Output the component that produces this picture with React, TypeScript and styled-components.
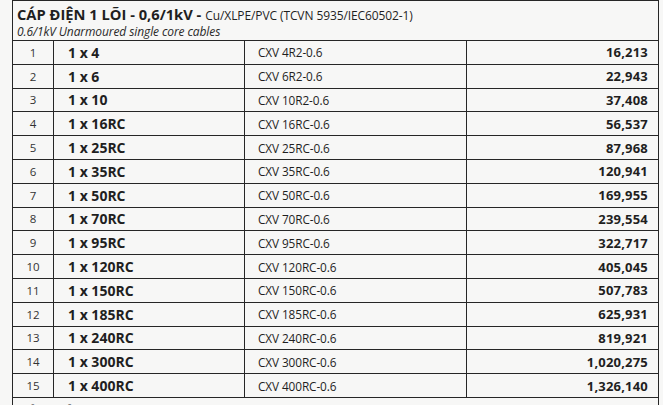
import { createGlobalStyle } from "styled-components";
import styled from "styled-components";

const GlobalStyle = createGlobalStyle`
  html, body {
    margin: 0;
    padding: 0;
    background: #f7f7f6;
    overflow: hidden;
  }
  body {
    font-family: "Open Sans", "Liberation Sans", sans-serif;
    color: #1f1f1f;
  }
`;

const Page = styled.div`
  width: 663px;
  height: 405px;
  overflow: hidden;
  padding-left: 12px;
  box-sizing: border-box;
`;

const Sheet = styled.div`
  width: 647px;
  border-left: 1.5px solid #262626;
  border-right: 1.5px solid #262626;
  border-top: 1.5px solid #262626;
  box-sizing: border-box;
`;

const SectionHead = styled.div`
  display: flex;
  flex-direction: column;
  height: 40px;
  padding-left: 4px;
  border-bottom: 1.5px solid #262626;
  box-sizing: border-box;
`;

const Title = styled.div`
  height: 22px;
  display: flex;
  align-items: flex-end;
  gap: 4px;
  white-space: nowrap;
`;

const TitleStrong = styled.span`
  font-weight: 700;
  font-size: 14.7px;
  line-height: 17px;
`;

const TitleNote = styled.span`
  font-size: 12px;
  line-height: 15px;
  letter-spacing: -0.1px;
`;

const Subtitle = styled.div`
  margin-top: 2px;
  font-style: italic;
  font-size: 12px;
  line-height: 14px;
  letter-spacing: -0.1px;
  color: #2a2a2a;
`;

const Row = styled.div`
  display: grid;
  grid-template-columns: 41px 191px 222px 1fr;
  height: 23.8px;
  border-bottom: 1.5px solid #262626;
  box-sizing: border-box;
`;

const Cell = styled.div<{ $last?: boolean }>`
  display: flex;
  align-items: center;
  border-right: ${(p) => (p.$last ? "none" : "1.5px solid #262626")};
  white-space: nowrap;
  overflow: hidden;
`;

const NumCell = styled(Cell)`
  justify-content: center;
  font-size: 11.5px;
  color: #333;
`;

const SizeCell = styled(Cell)`
  padding-left: 14px;
  font-size: 14px;
  font-weight: 700;
`;

const CodeCell = styled(Cell)`
  padding-left: 13px;
  font-size: 11.8px;
  letter-spacing: -0.1px;
`;

const PriceCell = styled(Cell)`
  justify-content: flex-end;
  padding-right: 10px;
  font-size: 13px;
  font-weight: 700;
  letter-spacing: 0.2px;
`;

const NextHead = styled.div`
  padding: 5px 0 0 4px;
  font-weight: 700;
  font-size: 14.7px;
  line-height: 18px;
  white-space: nowrap;
`;

const rows: [string, string, string][] = [
  ["1 x 4", "CXV 4R2-0.6", "16,213"],
  ["1 x 6", "CXV 6R2-0.6", "22,943"],
  ["1 x 10", "CXV 10R2-0.6", "37,408"],
  ["1 x 16RC", "CXV 16RC-0.6", "56,537"],
  ["1 x 25RC", "CXV 25RC-0.6", "87,968"],
  ["1 x 35RC", "CXV 35RC-0.6", "120,941"],
  ["1 x 50RC", "CXV 50RC-0.6", "169,955"],
  ["1 x 70RC", "CXV 70RC-0.6", "239,554"],
  ["1 x 95RC", "CXV 95RC-0.6", "322,717"],
  ["1 x 120RC", "CXV 120RC-0.6", "405,045"],
  ["1 x 150RC", "CXV 150RC-0.6", "507,783"],
  ["1 x 185RC", "CXV 185RC-0.6", "625,931"],
  ["1 x 240RC", "CXV 240RC-0.6", "819,921"],
  ["1 x 300RC", "CXV 300RC-0.6", "1,020,275"],
  ["1 x 400RC", "CXV 400RC-0.6", "1,326,140"],
];

export default function App() {
  return (
    <Page>
      <GlobalStyle />
      <Sheet>
        <SectionHead>
          <Title>
            <TitleStrong>CÁP ĐIỆN 1 LÕI - 0,6/1kV -</TitleStrong>
            <TitleNote>Cu/XLPE/PVC (TCVN 5935/IEC60502-1)</TitleNote>
          </Title>
          <Subtitle>0.6/1kV Unarmoured single core cables</Subtitle>
        </SectionHead>
        {rows.map(([size, code, price], i) => (
          <Row key={code}>
            <NumCell>{i + 1}</NumCell>
            <SizeCell>{size}</SizeCell>
            <CodeCell>{code}</CodeCell>
            <PriceCell $last>{price}</PriceCell>
          </Row>
        ))}
        <NextHead>CÁP ĐIỆN 2 LÕI - 0,6/1kV</NextHead>
      </Sheet>
    </Page>
  );
}
